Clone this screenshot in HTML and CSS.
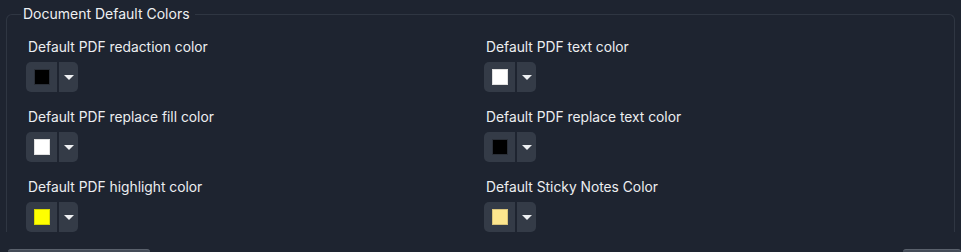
FILE: index.html
```html
<!DOCTYPE html>
<html lang="en">
<head>
    <meta charset="UTF-8">
    <meta name="viewport" content="width=device-width, initial-scale=1.0">
    <title>Document Default Colors</title>
    <link rel="stylesheet" href="styles.css">
</head>
<body>
    <fieldset class="color-group">
        <legend>Document Default Colors</legend>

        <div class="color-grid">
            <div class="color-field">
                <label>Default PDF redaction color</label>
                <div class="picker">
                    <button class="picker-swatch"><span class="swatch swatch-black"></span></button>
                    <button class="picker-caret"><span class="caret"></span></button>
                </div>
            </div>
            <div class="color-field">
                <label>Default PDF text color</label>
                <div class="picker">
                    <button class="picker-swatch"><span class="swatch swatch-white"></span></button>
                    <button class="picker-caret"><span class="caret"></span></button>
                </div>
            </div>
            <div class="color-field">
                <label>Default PDF replace fill color</label>
                <div class="picker">
                    <button class="picker-swatch"><span class="swatch swatch-white"></span></button>
                    <button class="picker-caret"><span class="caret"></span></button>
                </div>
            </div>
            <div class="color-field">
                <label>Default PDF replace text color</label>
                <div class="picker">
                    <button class="picker-swatch"><span class="swatch swatch-black"></span></button>
                    <button class="picker-caret"><span class="caret"></span></button>
                </div>
            </div>
            <div class="color-field">
                <label>Default PDF highlight color</label>
                <div class="picker">
                    <button class="picker-swatch"><span class="swatch swatch-yellow"></span></button>
                    <button class="picker-caret"><span class="caret"></span></button>
                </div>
            </div>
            <div class="color-field">
                <label>Default Sticky Notes Color</label>
                <div class="picker">
                    <button class="picker-swatch"><span class="swatch swatch-note"></span></button>
                    <button class="picker-caret"><span class="caret"></span></button>
                </div>
            </div>
        </div>
    </fieldset>

    <div class="footer">
        <button class="footer-button wide"></button>
        <button class="footer-button"></button>
    </div>
</body>
</html>
```

FILE: styles.css
```css
* {
    box-sizing: border-box;
}

html, body {
    height: 100%;
}

body {
    margin: 0;
    overflow: hidden;
    background-color: #1e2430;
    color: #eceef0;
    font-family: Inter, "Noto Sans", Arial, sans-serif;
}

.color-group {
    margin: 5px 6px 0 6px;
    padding: 16px 12px 0 19px;
    border: 1px solid #2f3642;
    border-bottom: none;
    border-radius: 6px 6px 0 0;
    min-width: 0;
}

.color-group legend {
    margin-left: -5px;
    padding: 0 5px 0 2px;
    font-size: 14px;
    line-height: 18px;
    color: #eef0f2;
}

.color-grid {
    display: grid;
    grid-template-columns: 458px 1fr;
    row-gap: 17px;
}

.color-field label {
    display: block;
    padding-left: 2px;
    font-size: 13.8px;
    line-height: 16px;
    margin-bottom: 7px;
}

.picker {
    display: flex;
    gap: 2px;
    height: 30px;
}

.picker button {
    border: none;
    padding: 0;
    margin: 0;
    background-color: #343b47;
    display: flex;
    align-items: center;
    justify-content: center;
    cursor: pointer;
}

.picker-swatch {
    width: 31px;
    border-radius: 5px 0 0 5px;
}

.picker-caret {
    width: 19px;
    border-radius: 0 5px 5px 0;
}

.swatch {
    display: block;
    width: 16px;
    height: 16px;
    border: 1px solid #2a2f38;
}

.swatch-black { background-color: #000000; }
.swatch-white { background-color: #ffffff; border-color: #e0e0e0; }
.swatch-yellow { background-color: #ffff00; border-color: #d8d800; }
.swatch-note { background-color: #fde68e; border-color: #d9c47a; }

.caret {
    width: 0;
    height: 0;
    border-left: 5px solid transparent;
    border-right: 5px solid transparent;
    border-top: 5px solid #eef0f2;
}

.footer {
    display: flex;
    justify-content: space-between;
    margin-top: 17px;
    padding-left: 8px;
}

.footer-button {
    height: 3px;
    width: 142px;
    padding: 0;
    border: none;
    border-top: 1px solid #5a616c;
    border-radius: 5px 5px 0 0;
    background-color: #444b57;
}

.footer-button:last-child {
    width: 58px;
}
```
